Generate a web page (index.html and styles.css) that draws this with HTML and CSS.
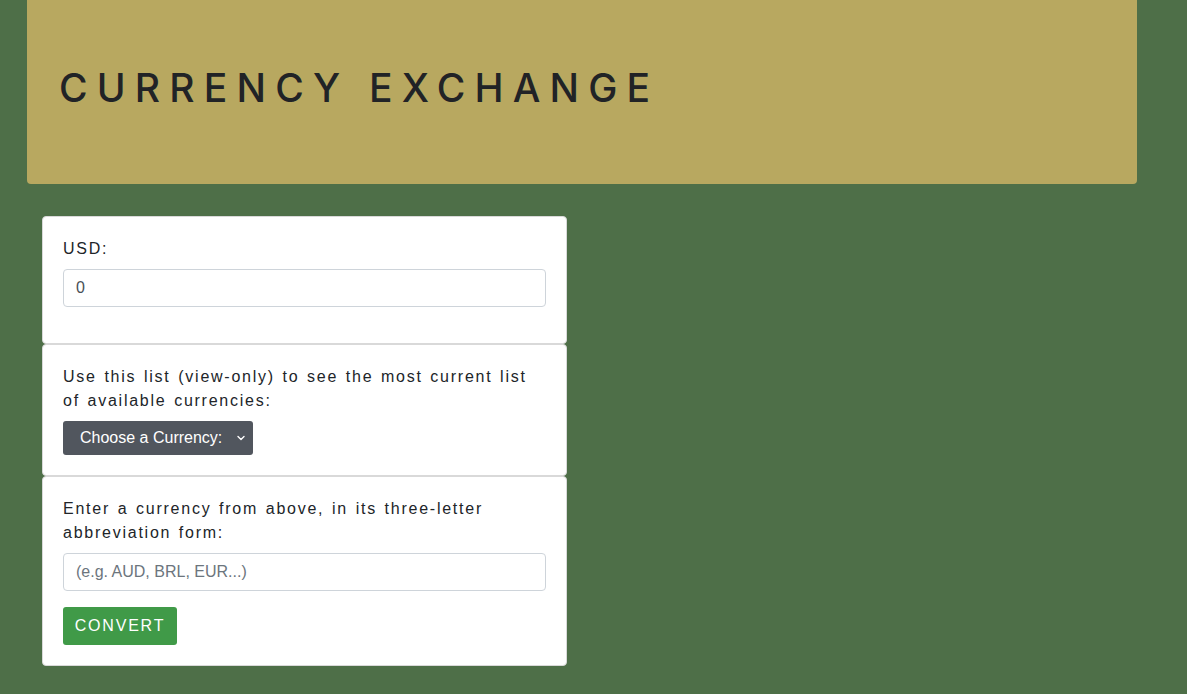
FILE: index.html
```html
<!DOCTYPE html>
<html lang="en">
<head>
<meta charset="utf-8">
<title>Currency Exchange</title>
<link rel="stylesheet" href="styles.css">
</head>
<body>
  <header class="jumbotron">
    <h1 class="title">CURRENCY EXCHANGE</h1>
  </header>
  <main class="panel">
    <section class="card">
      <label class="label" for="usd">USD:</label>
      <input class="field" id="usd" type="text" value="0">
    </section>
    <section class="card card-list">
      <p class="label">Use this list (view-only) to see the most current list of available currencies:</p>
      <div class="select">
        <span>Choose a Currency:</span>
        <svg class="chev" width="8" height="6" viewBox="0 0 8 6"><path d="M1 1.5 L4 4.5 L7 1.5" fill="none" stroke="#fff" stroke-width="1.4" stroke-linecap="round" stroke-linejoin="round"/></svg>
      </div>
    </section>
    <section class="card card-convert">
      <label class="label" for="code">Enter a currency from above, in its three-letter abbreviation form:</label>
      <input class="field" id="code" type="text" placeholder="(e.g. AUD, BRL, EUR...)">
      <button class="btn" type="button">CONVERT</button>
    </section>
  </main>
</body>
</html>
```
FILE: styles.css
```css
* { box-sizing: border-box; }
html, body { margin: 0; }
body {
  background: #4e6f48;
  font-family: "Liberation Sans", Arial, sans-serif;
  color: #212529;
  min-height: 694px;
  padding: 0 50px 0 27px;
}
.jumbotron {
  background: #b8a860;
  border-radius: 0 0 4px 4px;
  height: 184px;
  padding: 64px 32px 0;
}
.title {
  margin: 0;
  font-family: Inter, Roboto, "Liberation Sans", sans-serif;
  font-weight: 500;
  font-size: 39px;
  line-height: 48px;
  letter-spacing: 9.2px;
  color: #212326;
}
.panel {
  margin: 32px 0 0 15px;
  width: 525px;
  display: flex;
  flex-direction: column;
}
.card {
  background: #fff;
  border: 1px solid #d9d9d9;
  border-radius: 4px;
  padding: 20px 20px 36px;
  display: flex;
  flex-direction: column;
  align-items: flex-start;
}
.card-list { padding-bottom: 20px; }
.card-convert { padding-bottom: 20px; }
.label {
  margin: 0 0 8px;
  font-size: 16px;
  line-height: 24px;
  letter-spacing: 1.75px;
  word-spacing: 1.5px;
  color: #212529;
}
.field {
  width: 100%;
  height: 38px;
  border: 1px solid #ced4da;
  border-radius: 4px;
  padding: 6px 12px;
  font-family: "Liberation Sans", Arial, sans-serif;
  font-size: 16px;
  color: #495057;
  background: #fff;
}
.field::placeholder { color: #6c757d; }
.select {
  width: 190px;
  height: 34px;
  background: #51565e;
  border-radius: 3px;
  color: #fff;
  display: flex;
  align-items: center;
  justify-content: space-between;
  padding: 0 8px 0 17px;
  font-size: 16px;
}
.btn {
  margin-top: 16px;
  width: 114px;
  height: 38px;
  background: #409a48;
  color: #fff;
  border: none;
  border-radius: 3px;
  font-family: "Liberation Sans", Arial, sans-serif;
  font-size: 16px;
  letter-spacing: 1.8px;
}
```
